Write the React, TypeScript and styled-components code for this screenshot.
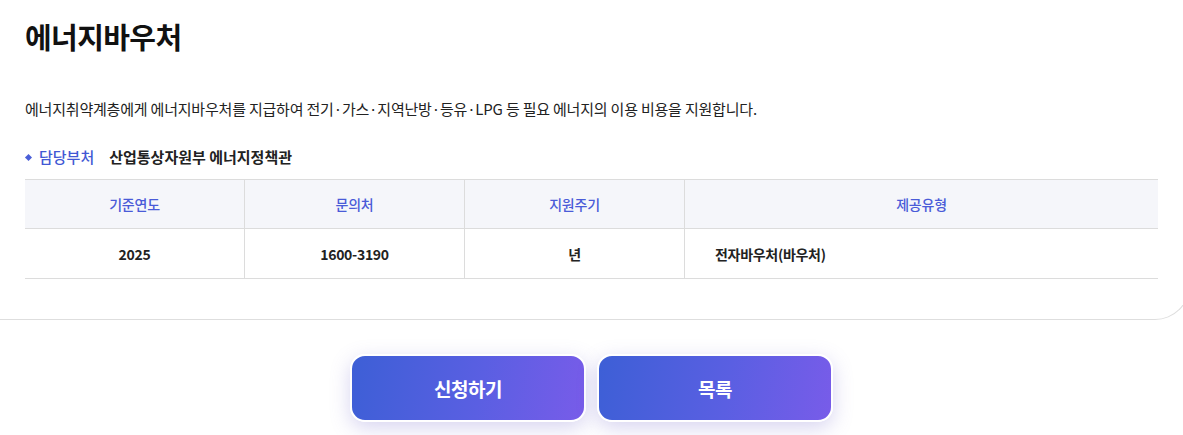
import styled, { createGlobalStyle } from 'styled-components';

const GlobalStyle = createGlobalStyle`
  html, body {
    margin: 0;
    padding: 0;
    background: #ffffff;
    overflow-x: hidden;
  }
  body {
    font-family: "Noto Sans CJK KR", "Noto Sans", sans-serif;
    color: #222;
  }
`;

// data for the info table
const columns = [
  { head: '기준연도', value: '2025', align: 'center' },
  { head: '문의처', value: '1600-3190', align: 'center' },
  { head: '지원주기', value: '년', align: 'center' },
  { head: '제공유형', value: '전자바우처(바우처)', align: 'left' },
];

const Page = styled.div`
  width: 100%;
`;

const Card = styled.section`
  width: calc(100% + 7px);
  box-sizing: border-box;
  padding: 14px 31px 40px 25px;
  border-bottom: 1px solid #dedede;
  border-right: 1px solid #dedede;
  border-bottom-right-radius: 35px;
  background: #fff;
`;

const Title = styled.h1`
  margin: 0;
  font-size: 29px;
  font-weight: 700;
  line-height: 44px;
  letter-spacing: -0.6px;
  color: #111;
`;

const Desc = styled.p`
  margin: 40px 0 0;
  font-size: 15px;
  line-height: 22px;
  letter-spacing: -0.2px;
  color: #222;
`;

const Dept = styled.div`
  display: flex;
  align-items: center;
  margin-top: 27px;
  font-size: 15px;
  line-height: 20px;
  letter-spacing: 0;
`;

const Bullet = styled.span`
  width: 5px;
  height: 5px;
  background: #4a5fd8;
  transform: rotate(45deg);
  margin: 0 8px 0 1px;
`;

const DeptLabel = styled.span`
  color: #4158d4;
  font-weight: 500;
  margin-right: 15px;
`;

const DeptName = styled.span`
  color: #222;
  font-weight: 700;
`;

const Table = styled.div`
  display: grid;
  grid-template-columns: 220px 220px 220px 1fr;
  margin-top: 12px;
  border-top: 1px solid #dcdcdc;
`;

const HeadCell = styled.div<{ $last?: boolean }>`
  height: 48px;
  display: flex;
  align-items: center;
  justify-content: center;
  background: #f5f6fa;
  border-bottom: 1px solid #dcdcdc;
  border-right: ${(p) => (p.$last ? 'none' : '1px solid #dcdcdc')};
  color: #4a5bd8;
  font-size: 14px;
  font-weight: 500;
  letter-spacing: -0.2px;
`;

const BodyCell = styled.div<{ $last?: boolean; $align: string }>`
  height: 49px;
  display: flex;
  align-items: center;
  justify-content: ${(p) => (p.$align === 'left' ? 'flex-start' : 'center')};
  padding-left: ${(p) => (p.$align === 'left' ? '30px' : '0')};
  border-bottom: 1px solid #dcdcdc;
  border-right: ${(p) => (p.$last ? 'none' : '1px solid #dcdcdc')};
  color: #222;
  font-size: 14px;
  font-weight: 700;
  letter-spacing: -0.3px;
`;

const Buttons = styled.div`
  display: flex;
  justify-content: center;
  gap: 11px;
  padding-top: 34px;
  padding-bottom: 20px;
`;

const Button = styled.button`
  width: 236px;
  height: 68px;
  box-sizing: border-box;
  border: 2px solid #fff;
  border-radius: 15px;
  background: linear-gradient(100deg, #3d5fd6 0%, #5a5fe2 55%, #785ce9 100%);
  box-shadow: 0 6px 20px rgba(110, 100, 200, 0.28);
  color: #fff;
  font-family: "Noto Sans CJK KR", "Noto Sans", sans-serif;
  font-size: 19px;
  font-weight: 700;
  letter-spacing: -0.5px;
  cursor: pointer;
`;

function App() {
  return (
    <Page>
      <GlobalStyle />
      <Card>
        <Title>에너지바우처</Title>
        <Desc>
          에너지취약계층에게 에너지바우처를 지급하여 전기·가스·지역난방·등유·LPG 등 필요 에너지의 이용 비용을 지원합니다.
        </Desc>
        <Dept>
          <Bullet />
          <DeptLabel>담당부처</DeptLabel>
          <DeptName>산업통상자원부 에너지정책관</DeptName>
        </Dept>
        <Table>
          {columns.map((c, i) => (
            <HeadCell key={c.head} $last={i === columns.length - 1}>{c.head}</HeadCell>
          ))}
          {columns.map((c, i) => (
            <BodyCell key={c.head} $last={i === columns.length - 1} $align={c.align}>{c.value}</BodyCell>
          ))}
        </Table>
      </Card>
      <Buttons>
        <Button>신청하기</Button>
        <Button>목록</Button>
      </Buttons>
    </Page>
  );
}

export default App;
